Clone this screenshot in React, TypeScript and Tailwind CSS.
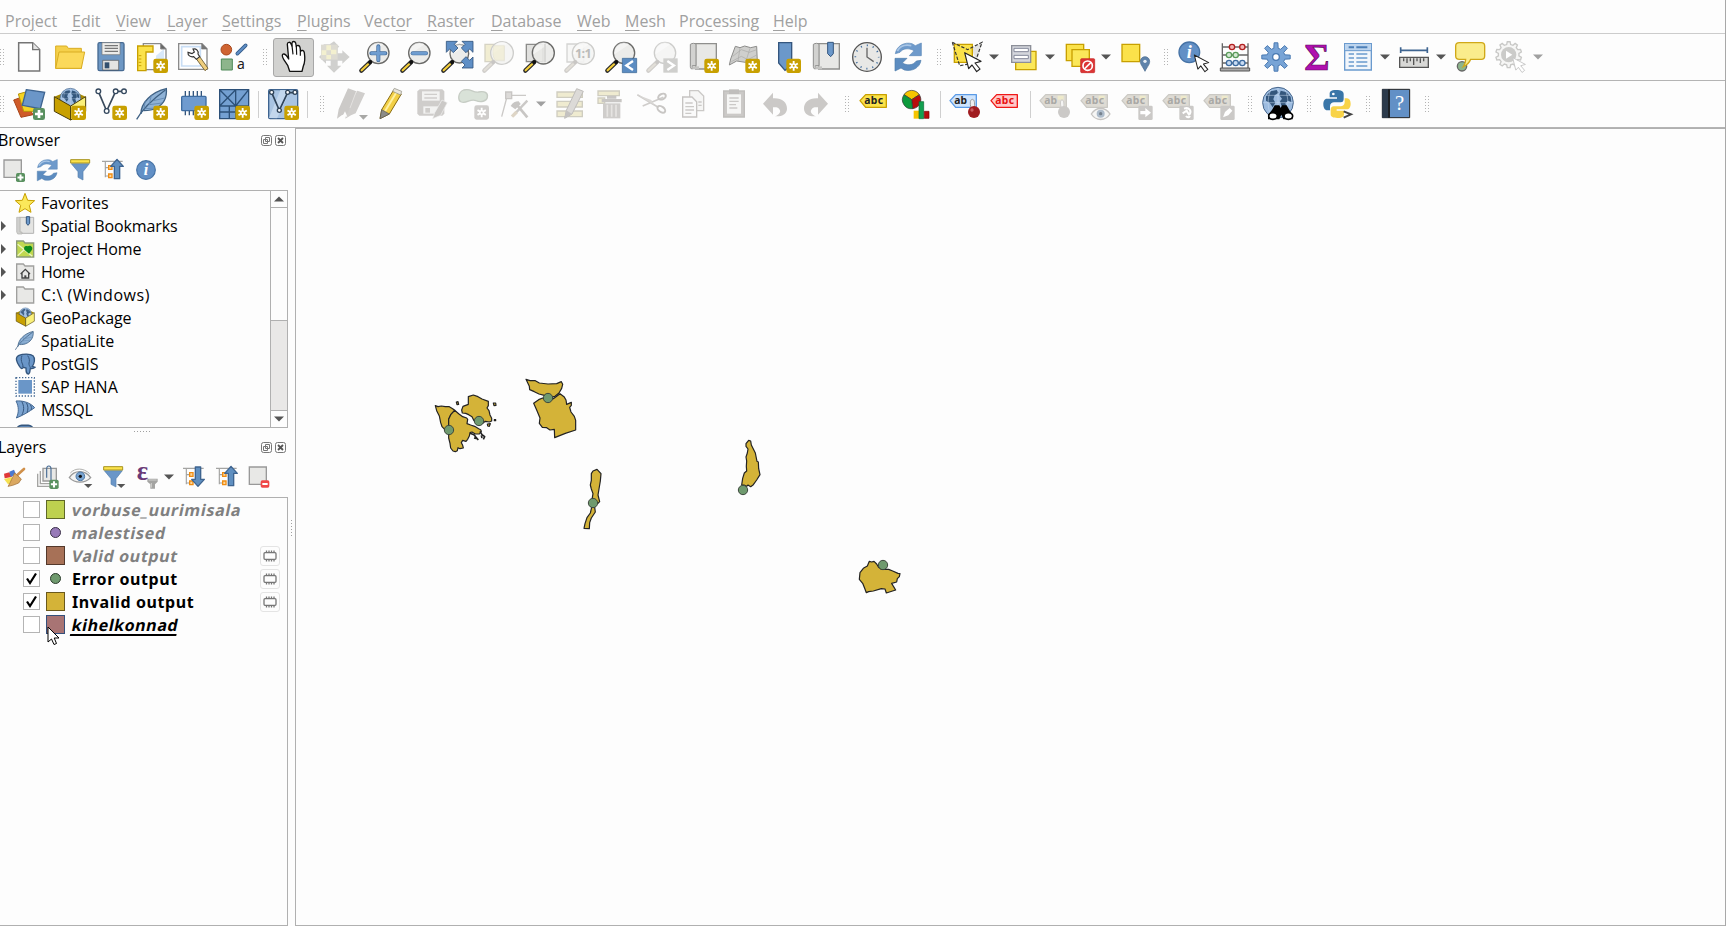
import React from "react";

type Kids = { children?: React.ReactNode };

const Ico = ({ s = 32, children }: Kids & { s?: number }) => (
  <svg width={s} height={s} viewBox={`0 0 ${s * 3} ${s * 3}`} fill="none" className="block shrink-0 overflow-visible">
    {children}
  </svg>
);

/* ---------- shared pieces ---------- */
const Star = ({ x = 52, y = 53, c = "#c8a000" }: { x?: number; y?: number; c?: string }) => (
  <g transform={`translate(${x} ${y})`}>
    <rect width="44" height="43" rx="7" fill={c} />
    <path d="M22 7v29M9.500 14.500l25 14M34.500 14.500l-25 14" stroke="#fff" strokeWidth="5.500" />
    <circle cx="22" cy="21.500" r="7.500" fill="#fff" />
    <circle cx="22" cy="21.500" r="3" fill={c} />
  </g>
);
const Plus = ({ x, y, s = 36 }: { x: number; y: number; s?: number }) => (
  <g transform={`translate(${x} ${y}) scale(${s / 36})`}>
    <rect width="36" height="36" rx="7" fill="#5a9160" />
    <path d="M18 6v24M6 18h24" stroke="#fff" strokeWidth="8" />
  </g>
);
const Lens = ({ cx = 58, cy = 36, r = 32, off = false, children }: Kids & { cx?: number; cy?: number; r?: number; off?: boolean }) => (
  <>
    <path d="M32 65L7 89" stroke={off ? "#d0cecb" : "#2b2b2b"} strokeWidth="13" strokeLinecap="round" />
    <path d="M27 70L8 88" stroke={off ? "#e2dfd8" : "#f5cf3a"} strokeWidth="6.500" strokeLinecap="round" />
    <circle cx={cx} cy={cy} r={r} fill={off ? "#f4f4f3" : "#e9e9e7"} fillOpacity="0.88" stroke={off ? "#cdcdcb" : "#6a6a68"} strokeWidth="4" />
    <path d={`M${cx - r + 4} ${cy + 4}a${r - 4} ${r - 4} 0 0 1 ${r + 12} ${-r + 2}z`} fill="#fff" opacity="0.45" />
    <circle cx="34" cy="63" r="6" fill={off ? "#c8c6c4" : "#111"} />
    {children}
  </>
);
const Cursor = ({ x, y, k = 1, off = false }: { x: number; y: number; k?: number; off?: boolean }) => (
  <path transform={`translate(${x} ${y}) scale(${k})`} d="M0 0l12 48 10-11 14 20 10-8-15-18 18-5z" fill="#fff" stroke={off ? "#c4c4c4" : "#222"} strokeWidth="3.500" strokeLinejoin="round" />
);
const Pencil = () => (
  <g strokeLinejoin="round">
    <path d="M15 92l5-27L56 6l23 12-36 60z" fill="#f2cf45" stroke="#8a6c10" strokeWidth="3" />
    <path d="M30 70L65 12" stroke="#fff0a0" strokeWidth="6" />
    <path d="M53 10l5-9 22 9-3 11z" fill="#e9e5da" stroke="#8a8a80" strokeWidth="2" />
    <path d="M15 92l5-27 23 13z" fill="#8c8c88" stroke="#555" strokeWidth="2" />
  </g>
);
const Feather = () => (
  <>
    <path d="M15 78C14 46 46 12 91 2c2 24-6 46-30 58-14 8-26 8-38 8" fill="#8fb2d6" stroke="#3f6184" strokeWidth="4" />
    <path d="M2 94C20 62 50 34 88 6" stroke="#3f6184" strokeWidth="4" />
    <path d="M28 62l34-2M40 50l38-5M52 38l34-8M24 62l4-24M40 48l6-26" stroke="#5f86b0" strokeWidth="2.500" />
  </>
);
const Globe = ({ cx, cy, r }: { cx: number; cy: number; r: number }) => (
  <g transform={`translate(${cx} ${cy}) scale(${r / 46})`}>
    <circle r="46" fill="#9dbce0" stroke="#46668c" strokeWidth="3" />
    <path d="M-36-20l14-14 18-4 6 8-12 8-4 12 6 10-8 14-8-12-12-8zM8-36l16 4 14 14 2 16-10-4-8 8 4 12-8 8-8-14-4-12 6-8-8-10z" fill="#33567c" />
    <path d="M-44 0H44M-36-22H36M0-44V44M-22-38c-10 24-10 50 0 76M22-38c10 24 10 50 0 76" stroke="#c9dcf0" strokeWidth="1.500" />
  </g>
);
const Package = () => (
  <>
    <path d="M1 26L50 6l45 20-45 24z" fill="#a88a00" />
    <Globe cx={49} cy={32} r={31} />
    <path d="M1 26l49 28v42L1 70z" fill="#c8a000" stroke="#4a3c08" strokeWidth="3" />
    <path d="M50 54l45-28v44L50 96z" fill="#faf07a" stroke="#4a3c08" strokeWidth="3" />
  </>
);
const RefreshArt = () => (
  <>
    <path d="M10 38C14 14 38 2 60 8l10 6L88 6v38H52l14-15C50 20 32 22 24 34z" fill="#6e9acb" stroke="#5b88b8" strokeWidth="2" />
    <path d="M87 58C83 82 59 92 37 87l-10-6-18 9V52h36L31 66c14 8 32 8 42-6z" fill="#5c8cc0" stroke="#4d7cab" strokeWidth="2" />
    <path d="M16 30C24 16 40 10 58 14" stroke="#a9c6e6" strokeWidth="5" />
  </>
);
const Tag = ({ fill, stroke, color, t = "abc" }: { fill: string; stroke: string; color: string; t?: string }) => (
  <>
    <path d="M3 38L20 20h62v38H20z" fill={fill} stroke={stroke} strokeWidth="4" strokeLinejoin="round" />
    <text x="16" y="49" fontFamily="'Noto Sans','Liberation Sans',sans-serif" fontWeight="700" fontSize="31" fill={color} textLength={t.length === 3 ? 56 : 38}>
      {t}
    </text>
  </>
);
const GrayTag = ({ t = "abc" }: { t?: string }) => (
  <>
    <path d="M3 38L20 20h62v38H20z" fill="#dedbd4" stroke="#cbc9c4" strokeWidth="4" strokeLinejoin="round" />
    <path d="M56 23h18v12H56z" fill="#eeeacb" />
    <text x="16" y="49" fontFamily="'Noto Sans','Liberation Sans',sans-serif" fontWeight="700" fontSize="31" fill="#a9a8a5" textLength={t.length === 3 ? 56 : 38}>
      {t}
    </text>
  </>
);
const gearPath = (n: number, cx: number, cy: number, ro: number, ri: number) => {
  let d = "";
  for (let i = 0; i < n; i++) {
    const a = (i / n) * Math.PI * 2 - Math.PI / 2;
    const w = Math.PI / n;
    const pts = [[-w * 0.62, ri], [-w * 0.34, ro], [w * 0.34, ro], [w * 0.62, ri]];
    for (const [o, r] of pts) d += `${d ? "L" : "M"}${(cx + Math.cos(a + o) * r).toFixed(1)} ${(cy + Math.sin(a + o) * r).toFixed(1)}`;
  }
  return d + "Z";
};
const MapSheet = () => (
  <>
    <path d="M26 8h62v76H26z" fill="#e8e8e6" stroke="#8f8f8d" strokeWidth="4" />
    <path d="M10 10c6-4 14-4 17 0v64H16v10c-5 0-6-4-6-8z" fill="#d2d2d0" stroke="#8f8f8d" strokeWidth="3" />
    <path d="M16 76h20v9H16z" fill="#c4c4c2" />
  </>
);

/* ---------- project toolbar ---------- */
const NewFile = () => <Ico><path d="M17 5h42l21 21v64H17z" fill="#fff" stroke="#757575" strokeWidth="4.500" /><path d="M59 5v21h21" stroke="#757575" strokeWidth="4" fill="#e4e4e4" /></Ico>;
const Folder = () => <Ico><path d="M5 82V15h33l5 7h39v60z" fill="#f5d04a" stroke="#d9ad22" strokeWidth="3" /><path d="M5 82L15 33H92L82 82z" fill="#fbd95a" stroke="#d9ad22" strokeWidth="3" /></Ico>;
const Save = () => (
  <Ico>
    <rect x="9" y="5" width="78" height="84" rx="5" fill="#6d97c4" stroke="#466a92" strokeWidth="4" />
    <path d="M21 5h54v36H21z" fill="#ececea" stroke="#777" strokeWidth="2" />
    <path d="M29 14h40M29 22h40M29 31h40" stroke="#777" strokeWidth="3.500" />
    <path d="M23 58h48v29H23z" fill="#e4e4e2" stroke="#555" strokeWidth="2" />
    <path d="M29 64h14v18H29z" fill="#33506e" />
  </Ico>
);
const NewLayout = () => (
  <Ico>
    <path d="M22 8h52l16 16v62H22z" fill="#fff" stroke="#8a8a8a" strokeWidth="4" />
    <path d="M60 44l24-20v30H60z" fill="#d8e8fa" />
    <path d="M74 8v16h16" fill="#666" stroke="#8a8a8a" strokeWidth="3" />
    <path d="M5 15h46v18H30v56H5z" fill="#fbe24a" stroke="#c8a000" strokeWidth="4" />
    <path d="M8 44h8M8 54h8M8 64h8M8 74h8" stroke="#c8a000" strokeWidth="3" />
    <Star />
  </Ico>
);
const LayoutManager = () => (
  <Ico>
    <path d="M5 8h70l15 15v62H5z" fill="#fff" stroke="#8a8a8a" strokeWidth="4" />
    <path d="M14 17h56v58H14z" stroke="#c9def5" strokeWidth="5" />
    <path d="M74 8v16h16z" fill="#777" stroke="#777" strokeWidth="2" />
    <path d="M56 51l28 38 9-7-27-38z" fill="#f0ce7c" stroke="#7a6a40" strokeWidth="3" />
    <path d="M48 24c10-2 18 6 15 15l5 8-10 8-8-8c-10 2-18-4-17-13l12 4 7-5z" fill="#fff" stroke="#333" strokeWidth="3.500" />
  </Ico>
);
const StyleManager = () => (
  <Ico>
    <circle cx="25" cy="26" r="16" fill="#cf6432" stroke="#a8481c" strokeWidth="3" />
    <path d="M58 38L83 13" stroke="#375e8c" strokeWidth="11" strokeLinecap="round" />
    <path d="M58 38L83 13" stroke="#5f8fc6" strokeWidth="6" strokeLinecap="round" />
    <path d="M10 54h33v33H10z" fill="#8db58c" stroke="#4f8a58" strokeWidth="3" />
    <text x="57" y="83" fontSize="42" fontFamily="'Noto Sans',sans-serif" fill="#222">a</text>
  </Ico>
);
const Hand = () => (
  <Ico>
    <path d="M38 91l-6-18-12-18c-6-9-5-17 1-16 5 1 9 6 14 15L31 10c0-8 9-8 11-1l3 6V6c1-6 9-6 11 0l2 11c2-6 10-4 11 2l2 12c3-5 10-3 11 4 2 14 2 30-3 40l-4 16z" fill="#fff" stroke="#111" strokeWidth="4" strokeLinejoin="round" />
    <path d="M45 14l3 26M58 16l1 25M70 26v18" stroke="#111" strokeWidth="3.500" />
  </Ico>
);
const PanSel = () => (
  <Ico>
    <path d="M48 1l16 16-5 4v16h14v-9l22 20-22 20v-9H59v15h11L48 95 27 74h11V59H24v9L3 48l14-14V10h18z" fill="#d0d0ce" />
    <path d="M9 11h50v45H9z" fill="#dddbd2" />
    <path d="M11 28h14v14H11zM25 13h14v15H25zM39 26h16v14H39zM25 42h14v13H25z" fill="#f3f0cf" />
  </Ico>
);
const ZoomIn = () => <Ico><Lens><path d="M58 16v42M37 37h42" stroke="#466f9e" strokeWidth="12" strokeLinecap="round" /><path d="M58 17v40M38 37h40" stroke="#6f9dd0" strokeWidth="8" strokeLinecap="round" /></Lens></Ico>;
const ZoomOut = () => <Ico><Lens><path d="M38 37h40" stroke="#466f9e" strokeWidth="12" strokeLinecap="round" /><path d="M38 37h40" stroke="#6f9dd0" strokeWidth="8" strokeLinecap="round" /></Lens></Ico>;
const arrowD = "M0 0h33l-9 9 11 11-14 14-11-11-10 10z";
const ZoomFull = () => (
  <Ico>
    <Lens cx={55} cy={38} r={28} />
    <g fill="#5f8fc6" stroke="#34567e" strokeWidth="2.500">
      <path transform="translate(16 1)" d={arrowD} />
      <path transform="translate(96 1) scale(-1 1)" d={arrowD} />
      <path transform="translate(96 81) scale(-1 -1)" d={arrowD} />
    </g>
  </Ico>
);
const ZoomSel = () => <Ico><path d="M9 10h58v52H9z" fill="#f1edd2" stroke="#d6d3c4" strokeWidth="4" /><Lens off cx={60} cy={36} r={34}><path d="M36 14h31v44H40c-8-10-10-30-4-44z" fill="#f1edd2" stroke="#dcd9c4" strokeWidth="2" opacity="0.7" /></Lens></Ico>;
const ZoomLayer = () => <Ico><path d="M10 10h50v52H10z" fill="#e0e0de" stroke="#8c8c8a" strokeWidth="4" /><Lens cx={61} cy={36} r={33}><path d="M66 8v56" stroke="#cfcfcd" strokeWidth="4" /></Lens></Ico>;
const ZoomNative = () => (
  <Ico>
    <path d="M9 9h50v54H9z" fill="#f7f7f6" stroke="#d4d4d2" strokeWidth="4" />
    <Lens off cx={58} cy={37} r={33} />
    <text x="58" y="50" textAnchor="middle" fontSize="38" fontWeight="700" fontFamily="'Noto Sans',sans-serif" fill="#bcbcba" textLength="50">1:1</text>
  </Ico>
);
const ZoomLast = () => <Ico><Lens cx={57} cy={36} /><path d="M52 52h43v43H52z" fill="#5b8cc2" stroke="#34608f" strokeWidth="2" /><path d="M84 60L64 73.500 84 87" stroke="#fff" strokeWidth="7" /></Ico>;
const ZoomNext = () => <Ico><Lens off cx={57} cy={36} /><path d="M52 52h43v43H52z" fill="#cfcfcd" /><path d="M64 60l20 13.500L64 87" stroke="#fff" strokeWidth="7" /></Ico>;
const NewMap = () => <Ico><MapSheet /><Star /></Ico>;
const New3D = () => (
  <Ico>
    <path d="M22 16l14 4 14-5 18 5 18-4 2 46-14-4-22 6-26-4-22 12 4-18z" fill="#cfcfcd" stroke="#8c8c8a" strokeWidth="3" />
    <path d="M14 46l26-20 24 8 22-8M10 62l30-16 20 10 26-14M36 20l-6 40M66 22L54 60" stroke="#a9a9a7" strokeWidth="2" />
    <Star />
  </Ico>
);
const NewBookmark = () => <Ico><path d="M29 5h39v68L48 88 29 66z" fill="#6b98ca" stroke="#34567e" strokeWidth="4" /><Star /></Ico>;
const Bookmarks = () => <Ico><MapSheet /><path d="M53 4h17v34l-8 9-9-9z" fill="#6b98ca" stroke="#34567e" strokeWidth="3" /></Ico>;
const Clock = () => (
  <Ico>
    <circle cx="48" cy="48" r="43" fill="#e8e8e6" stroke="#555" strokeWidth="4" />
    <circle cx="48" cy="48" r="35" stroke="#3e6c9e" strokeWidth="5" strokeDasharray="3.500 14.820" strokeDashoffset="1.750" />
    <path d="M48 20v28l20 14" stroke="#666" strokeWidth="4" />
  </Ico>
);
const Refresh = () => <Ico><RefreshArt /></Ico>;
const SelectIco = () => (
  <Ico>
    <path d="M60 24L94 4 78 60z" fill="#e3e3e1" />
    <path d="M10 10h54v54H10z" fill="#fbe24a" stroke="#c8a000" strokeWidth="4" />
    <path d="M4 4l46 22L93 4 74 60M4 4l22 70 22-4" stroke="#333" strokeWidth="3.500" strokeDasharray="10 5" />
    <Cursor x={41} y={35} />
  </Ico>
);
const SelectForm = () => <Ico><path d="M26 31h61v55H26z" fill="#fbe85a" stroke="#c8a000" strokeWidth="4" /><path d="M14 14h57v50H14z" fill="#d4d6dc" stroke="#8c8f98" strokeWidth="4" /><path d="M21 22h43v10H21zM21 43h43v10H21z" fill="#fff" stroke="#84889a" strokeWidth="3" /></Ico>;
const Deselect = () => (
  <Ico>
    <path d="M10 10h52v49H10z" fill="#fbe24a" stroke="#c8a000" strokeWidth="4" />
    <path d="M27 26h52v50H27z" fill="#fbe85a" stroke="#c8a000" strokeWidth="4" />
    <rect x="53" y="53" width="42" height="42" rx="3" fill="#dc3535" stroke="#c42020" strokeWidth="2" />
    <circle cx="74" cy="74" r="14" stroke="#fff" strokeWidth="5" />
    <path d="M64 84l20-20" stroke="#fff" strokeWidth="5" />
  </Ico>
);
const SelectLoc = () => <Ico><path d="M9 10h53v52H9z" fill="#fbe24a" stroke="#c8a000" strokeWidth="4" /><path d="M78 91c-8-16-14-20-14-30a14 14 0 0 1 28 0c0 10-6 14-14 30z" fill="#5f83ab" stroke="#48698e" strokeWidth="2" /><circle cx="78" cy="61" r="5" fill="#e8eef5" /></Ico>;
const InfoI = ({ x, y, k = 1 }: { x: number; y: number; k?: number }) => (
  <g transform={`translate(${x} ${y}) scale(${k})`}>
    <circle r="31" fill="#6290c6" stroke="#4673a6" strokeWidth="4" />
    <text x="0" y="18" textAnchor="middle" fontFamily="'Liberation Serif',serif" fontWeight="700" fontStyle="italic" fontSize="54" fill="#fff">i</text>
  </g>
);
const Identify = () => <Ico><InfoI x={34} y={34} /><Cursor x={49} y={42} k={0.88} /></Ico>;
const Abacus = () => (
  <Ico>
    <path d="M10 7v74M87 7v74M10 18h77M10 42h77M10 66h77" stroke="#666" strokeWidth="4" />
    <path d="M4 81h88v9H4z" fill="#aaa" stroke="#555" strokeWidth="3" />
    <g fill="#f3b4b4" stroke="#b02020" strokeWidth="4"><circle cx="39" cy="18" r="8" /><circle cx="70" cy="18" r="8" /></g>
    <g fill="#d4ead4" stroke="#5a9a5a" strokeWidth="4"><circle cx="30" cy="42" r="8" /><circle cx="50" cy="42" r="8" /></g>
    <g fill="#c9dcf2" stroke="#3e6ca0" strokeWidth="4"><circle cx="30" cy="66" r="8" /><circle cx="50" cy="66" r="8" /><circle cx="70" cy="66" r="8" /></g>
  </Ico>
);
const Gear = () => <Ico><path d={gearPath(8, 48, 48, 43, 27)} fill="#78a4d6" stroke="#4a7ab2" strokeWidth="3" strokeLinejoin="round" /><circle cx="48" cy="48" r="10" fill="#fff" stroke="#4a7ab2" strokeWidth="4" /></Ico>;
const Sigma = () => <Ico><text x="48" y="87" textAnchor="middle" fontFamily="'Liberation Serif','DejaVu Serif',serif" fontWeight="700" fontSize="116" fill="#b010b0" stroke="#5a0a5a" strokeWidth="2">Σ</text></Ico>;
const Table = () => (
  <Ico>
    <path d="M8 8h80v79H8z" fill="#f2f6fb" stroke="#6a9ace" strokeWidth="4" />
    <path d="M9 9h78v20H9z" fill="#bcd4ee" />
    <path d="M8 29h80" stroke="#6a9ace" strokeWidth="3" />
    <path d="M20 19h16M43 19h33" stroke="#4c7fb8" strokeWidth="6" />
    <path d="M20 39h16M43 39h33M20 51h16M43 51h33M20 63h16M43 63h33M20 75h16M43 75h33" stroke="#6a9ace" strokeWidth="4" />
  </Ico>
);
const Measure = () => <Ico><path d="M7 28h82M8 19v17M88 19v17" stroke="#3e6490" strokeWidth="5" /><path d="M5 49h86v30H5z" fill="#d8d8d6" stroke="#555" strokeWidth="4" /><path d="M17 52v9M27 52v14M37 52v9M47 52v20M57 52v9M67 52v14M77 52v9" stroke="#555" strokeWidth="4" /></Ico>;
const Tips = () => <Ico><circle cx="24" cy="76" r="14" fill="#8db58c" stroke="#666" strokeWidth="4" /><path d="M16 5h66c6 0 10 4 10 10v30c0 6-4 10-10 10H50C46 66 40 72 28 77c5-7 7-14 7-22H16C9 55 5 51 5 45V15C5 9 9 5 16 5z" fill="#faec8c" stroke="#d0a818" strokeWidth="4" /></Ico>;
const Action = () => <Ico><path d={gearPath(10, 41, 41, 39, 31)} fill="#f6f6f5" stroke="#c8c8c6" strokeWidth="4" /><circle cx="41" cy="41" r="23" fill="#cbcbc9" /><path d="M33 29l19 12-19 12z" fill="#fff" /><Cursor x={53} y={50} k={0.78} off /></Ico>;

/* ---------- layer toolbar ---------- */
const DataSource = () => (
  <Ico>
    <path d="M2 36l28-10 30 54-36 8z" fill="#cf5a28" stroke="#a84418" strokeWidth="3" />
    <path d="M16 18l30-8 22 60-36 0z" fill="#f5d423" stroke="#b89408" strokeWidth="3" />
    <path d="M40 5l55 8-13 49-54-10z" fill="#6b96c8" stroke="#3e6490" strokeWidth="4" />
    <Plus x={60} y={60} />
  </Ico>
);
const GeoPkg = () => <Ico><Package /><Star /></Ico>;
const Shape = () => (
  <Ico>
    <path d="M10 10l25 59L62 10h25" stroke="#3a4a5c" strokeWidth="5" />
    <g fill="#fff" stroke="#34485e" strokeWidth="4"><circle cx="10" cy="10" r="7" /><circle cx="35" cy="69" r="7" /><circle cx="62" cy="10" r="7" /><circle cx="87" cy="10" r="7" /></g>
    <Star />
  </Ico>
);
const SpatiaLite = () => <Ico><Feather /><Star /></Ico>;
const Scratch = () => (
  <Ico>
    <path d="M25 9v15M37 9v15M49 9v15M61 9v15M73 9v15M25 69v13M37 69v13M49 69v13" stroke="#34567e" strokeWidth="4" />
    <rect x="14" y="25" width="73" height="43" rx="3" fill="#6f9bcf" stroke="#3e6ca0" strokeWidth="4" />
    <Star />
  </Ico>
);
const MeshIco = () => (
  <Ico>
    <path d="M5 5h87v87H5z" fill="#74a0d2" />
    <path d="M5 5h87v87H5zM5 54h87M53 5v49M5 5l48 49M53 5L5 54M92 5L53 54M5 72h48M34 54v38M53 54v38" stroke="#2c5078" strokeWidth="4" />
    <Star />
  </Ico>
);
const Virtual = () => (
  <Ico>
    <rect x="5" y="5" width="87" height="87" rx="4" fill="#a9c4e2" stroke="#3e6490" strokeWidth="4" />
    <path d="M6 90L40 6h30L30 91z" fill="#c9dcf0" opacity="0.8" />
    <path d="M14 14l23 53L62 14h22" stroke="#2f4358" strokeWidth="5" />
    <g fill="#fff" stroke="#2f4358" strokeWidth="4"><circle cx="14" cy="13" r="6" /><circle cx="37" cy="67" r="6" /><circle cx="62" cy="13" r="6" /><circle cx="84" cy="13" r="6" /></g>
    <Star />
  </Ico>
);
const Edits = () => (
  <Ico>
    <path d="M34 92l4-28L70 8l23 8-28 60-14 6z" fill="#d0cecc" />
    <path d="M9 92l5-28L42 1l25 9-26 66-18 6z" fill="#cccac8" />
    <path d="M67 10L48 60" stroke="#e4e2e0" strokeWidth="3" />
    <path d="M26 84l7-14 7 16z" fill="#fdfdfd" />
    <path d="M75 81h27L88 95z" fill="#a8a8a6" />
  </Ico>
);
const Toggle = () => <Ico><Pencil /></Ico>;
const SaveEdits = () => (
  <Ico>
    <path d="M11 4h68l6 6v67l-6 6H10l-6-6V10z" fill="#cfcdcb" />
    <path d="M18 10h53v28H18z" fill="#f2f2f1" />
    <path d="M25 19h38M25 30h38" stroke="#cfcdcb" strokeWidth="4" />
    <path d="M22 55h44v22H22z" fill="#f2f2f1" />
    <path d="M28 60h14v14H28z" fill="#cfcdcb" />
    <path d="M50 92l6-18 22-38 16 8-20 38z" fill="#cbc9c7" stroke="#f2f2f1" strokeWidth="2" />
  </Ico>
);
const AddFeature = () => <Ico><path d="M20 6c22-6 26 8 44 6 18-4 30 2 27 16-2 12-20 16-34 10-16-8-28 10-44 4C0 36 4 12 20 6z" fill="#d9e2d8" stroke="#c6ccc4" strokeWidth="4" /><Star x={52} y={52} c="#cfcdcb" /></Ico>;
const Vertex = () => (
  <Ico>
    <path d="M26 30L11 86M34 22h50" stroke="#cbc9c7" strokeWidth="4" />
    <path d="M23 12h18v20H23z" fill="#dcdad8" stroke="#c8c6c4" strokeWidth="4" />
    <path d="M88 38L46 82" stroke="#cbc9c7" strokeWidth="7" />
    <path d="M58 52l30 36" stroke="#c8c6c4" strokeWidth="8" />
    <path d="M38 54c6-10 14-14 24-14l6 8-16 16z" fill="#c8c6c4" />
    <path d="M42 86l14-14" stroke="#ded5c6" strokeWidth="10" />
  </Ico>
);
const MultiEdit = () => <Ico><path d="M9 12h76v16H9zM9 40h76v17H9zM9 69h76v17H9z" fill="#efebd0" stroke="#cfcdc0" strokeWidth="4" /><path d="M32 91l5-24L68 2l20 8-34 68z" fill="#dcdad7" stroke="#bfbdbb" strokeWidth="3" /><path d="M32 91l5-24 17 11z" fill="#c4c2c0" /></Ico>;
const Trash = () => (
  <Ico>
    <path d="M9 9h64v14H9zM9 30h20v16H9z" fill="#efebd0" stroke="#cfcdc0" strokeWidth="4" />
    <path d="M20 33h60v10H20zM36 24h28v8H36z" fill="#c8c6c4" />
    <path d="M24 46h52v45H24z" fill="#cfcdcb" />
    <path d="M37 50v36M50 50v36M63 50v36" stroke="#e6e4e2" strokeWidth="5" />
  </Ico>
);
const Cut = () => <Ico><path d="M4 20l60 36M20 54l62-26" stroke="#cfcdcb" strokeWidth="5" /><path d="M4 20l42 16 8 14z" fill="#dad8d6" /><ellipse cx="78" cy="26" rx="12" ry="8" transform="rotate(-25 78 26)" stroke="#c8c6c4" strokeWidth="6" /><ellipse cx="76" cy="64" rx="13" ry="8" transform="rotate(35 76 64)" stroke="#c8c6c4" strokeWidth="6" /></Ico>;
const Copy = () => (
  <Ico>
    <path d="M38 8h26l16 16v44H38z" fill="#f6f6f5" stroke="#cbc9c7" strokeWidth="4" />
    <path d="M17 27h28l14 14v46H17z" fill="#fafafa" stroke="#c6c4c2" strokeWidth="4" />
    <path d="M25 45h22M25 56h26M25 66h26M25 76h18M64 42h10M64 52h10" stroke="#cbc9c7" strokeWidth="4" />
  </Ico>
);
const Paste = () => (
  <Ico>
    <path d="M17 9h62v78H17z" fill="#cbc9c7" stroke="#c0bebc" strokeWidth="4" />
    <path d="M27 19h42v58H27z" fill="#f6f6f5" />
    <path d="M33 4h30v14H33z" fill="#c0bebc" />
    <path d="M34 30h28M34 40h28M34 50h20M34 60h24" stroke="#cbc9c7" strokeWidth="4" />
  </Ico>
);
const UndoPath = () => <path d="M12 47L42 14v17c26-2 43 12 42 32-1 12-10 20-24 22h-12c14-6 18-14 14-20-4-7-10-8-20-7v22z" fill="#cbc9c7" />;
const Undo = () => <Ico><UndoPath /></Ico>;
const Redo = () => <Ico><g transform="translate(96 0) scale(-1 1)"><UndoPath /></g></Ico>;
const Label = () => <Ico><Tag fill="#fbe24a" stroke="#c8a000" color="#222" /></Ico>;
const Diagram = () => (
  <Ico>
    <path d="M35 35L12 20A27 27 0 0 1 58 20z" fill="#f5c400" stroke="#333" strokeWidth="2" />
    <path d="M35 35l23-15a27 27 0 0 1-20 42z" fill="#b80c0c" stroke="#333" strokeWidth="2" />
    <path d="M35 35l3 27A27 27 0 0 1 12 20z" fill="#0c9a3c" stroke="#333" strokeWidth="2" />
    <path d="M41 68h16v24H41z" fill="#f5c400" />
    <path d="M57 41h14v51H57z" fill="#12a050" stroke="#0a6a34" strokeWidth="2" />
    <path d="M73 70h14v21H73z" fill="#b80c0c" stroke="#700" strokeWidth="2" />
  </Ico>
);
const PinLabel = () => <Ico><Tag fill="#cfe4fc" stroke="#5a9ae6" color="#222" t="ab" /><path d="M66 60c-4-16-2-26 4-26s8 10 6 24z" fill="#eee" stroke="#999" strokeWidth="3" /><circle cx="75" cy="72" r="18" fill="#a01c20" /><circle cx="69" cy="66" r="5" fill="#c85a5e" /></Ico>;
const RedLabel = () => <Ico><Tag fill="#ffcaca" stroke="#f01818" color="#e81010" /></Ico>;
const G1 = () => <Ico><GrayTag t="ab" /><path d="M66 58c-3-14-2-22 3-22s7 8 5 22z" fill="#f4f4f3" stroke="#cbc9c7" strokeWidth="3" /><circle cx="75" cy="72" r="18" fill="#cbc9c7" /></Ico>;
const G2 = () => <Ico><GrayTag /><path d="M34 78c14-22 42-22 56 0-14 22-42 22-56 0z" fill="#f6f6f5" stroke="#c6c4c2" strokeWidth="4" /><circle cx="62" cy="77" r="12" fill="#aebccb" /><circle cx="62" cy="77" r="5" fill="#77828e" /></Ico>;
const GBox = ({ children }: Kids) => <Ico><GrayTag /><rect x="52" y="53" width="43" height="43" rx="4" fill="#cbc9c7" />{children}</Ico>;
const G3 = () => <GBox><path d="M58 69h15v-9l17 14-17 14v-9H58z" fill="#fff" /></GBox>;
const G4 = () => <GBox><path d="M66 62c16-6 24 8 16 18M62 76l12-8 8 14M72 84c4 6 10 4 12 0" stroke="#fff" strokeWidth="6" /></GBox>;
const G5 = () => <GBox><path d="M60 88l6-16 14-12 8 8-12 14z" fill="#fff" /></GBox>;
const GlobeBin = () => (
  <Ico>
    <Globe cx={48} cy={44} r={46} />
    <path d="M30 66l8-14h14l4 8 4-8h14l8 14 10 14v14H64l-6-14-6 14H18V80z" fill="#000" />
    <ellipse cx="33" cy="84" rx="13" ry="10" fill="#fff" stroke="#000" strokeWidth="5" />
    <ellipse cx="79" cy="84" rx="13" ry="10" fill="#fff" stroke="#000" strokeWidth="5" />
  </Ico>
);
const Python = () => (
  <Ico>
    <path d="M46 6c-18 0-20 6-20 12v10h22v4H18C10 32 7 40 7 49c0 10 4 18 12 18h8V55c0-8 6-12 12-12h20c6 0 9-4 9-10V18C68 10 60 6 46 6z" fill="#3a76a8" />
    <circle cx="37" cy="18" r="4" fill="#fff" />
    <path d="M49 90c18 0 20-6 20-12V68H47v-4h30c8 0 12-8 12-17s-4-16-11-16h-7v12c0 8-6 12-12 12H38c-6 0-9 4-9 10v14c0 8 8 11 20 11z" fill="#f8d348" />
    <path d="M68 70l22 9-22 10" stroke="#444" strokeWidth="6" />
  </Ico>
);
const HelpBook = () => (
  <Ico>
    <path d="M7 4h82v85H7z" fill="#6290c6" stroke="#222" strokeWidth="3" />
    <path d="M7 4h22v85H7z" fill="#2c3b4c" />
    <path d="M24 4h6v85h-6z" fill="#1c2024" />
    <text x="59" y="66" textAnchor="middle" fontFamily="'Liberation Serif',serif" fontSize="62" fill="#fff">?</text>
  </Ico>
);

/* ---------- toolbar layout ---------- */
const Btn = ({ children, on = false }: Kids & { on?: boolean }) => (
  <div className={on ? "flex h-[39px] w-[41px] shrink-0 items-center justify-center rounded-[3px] border border-[#a8a8a8] bg-[#d2d2d0]" : "flex h-[39px] w-[41px] shrink-0 items-center justify-center"}>{children}</div>
);
const Drop = ({ off = false }: { off?: boolean }) => (
  <div className="flex w-[15px] shrink-0 items-center justify-center pr-[2px]">
    <svg width="10" height="6" viewBox="0 0 10 6"><path d="M0 .5h10L5 5.500z" fill={off ? "#a0a0a0" : "#555"} /></svg>
  </div>
);
const Dots = () => (
  <svg width="5" height="17" viewBox="0 0 5 17" fill="#b4b4b4" className="block shrink-0">
    {[0, 3, 6, 9, 12, 15].map((y) => (
      <React.Fragment key={y}><rect x="0" y={y} width="1" height="1" /><rect x="3" y={y} width="1" height="1" /></React.Fragment>
    ))}
  </svg>
);
const Grip = () => <div className="flex w-[18px] shrink-0 items-center justify-center pl-[4px]"><Dots /></div>;
const Sep = () => <div className="flex w-[8px] shrink-0 justify-center"><div className="h-[27px] w-px bg-[#cfcfcf]" /></div>;
const Start = () => <div className="flex w-[8.5px] shrink-0 items-center"><Dots /></div>;

const menu: [string, string, string, string][] = [
  ["Pro", "j", "ect", "w-[67px]"], ["", "E", "dit", "w-[44px]"], ["", "V", "iew", "w-[51px]"], ["", "L", "ayer", "w-[55px]"],
  ["", "S", "ettings", "w-[75px]"], ["", "P", "lugins", "w-[67px]"], ["Vect", "o", "r", "w-[63px]"], ["", "R", "aster", "w-[64px]"],
  ["", "D", "atabase", "w-[86px]"], ["", "W", "eb", "w-[48px]"], ["", "M", "esh", "w-[54px]"], ["Pro", "c", "essing", "w-[94px]"], ["", "H", "elp", "w-[40px]"],
];

/* ---------- panels ---------- */
const FloatClose = () => (
  <div className="flex gap-[3px]">
    <svg width="11" height="11" viewBox="0 0 11 11" fill="none" stroke="#777"><rect x=".5" y=".5" width="10" height="10" rx="2" /><path d="M4.500 2.500h4v4h-4zM2.500 4.500h4v4h-4z" /></svg>
    <svg width="11" height="11" viewBox="0 0 11 11" fill="none" stroke="#777"><rect x=".5" y=".5" width="10" height="10" rx="2" /><path d="M3 3l5 5M8 3L3 8" stroke="#555" strokeWidth="1.800" /></svg>
  </div>
);
const Funnel = () => (
  <>
    <path d="M10 17h54L45 41v25l-15-8V41z" fill="#6a96c8" stroke="#5580ae" strokeWidth="2" />
    <path d="M8 5h57v10H8z" fill="#fbe24a" stroke="#a89420" strokeWidth="3" />
  </>
);
const TreeArrow = ({ down = false }: { down?: boolean }) => (
  <Ico s={24}>
    <path d="M3 10h62M13 10v48M13 29h10M13 54h10" stroke="#a4a4a2" strokeWidth="3.500" />
    <path d="M23 23h10v11H23zM23 48h10v11H23z" fill="#fcd7a0" stroke="#f08c10" strokeWidth="4" />
    <path transform={down ? "translate(0 68) scale(1 -1)" : undefined} d="M48 4l19 21H56v37H40V25H29z" fill="#5f8fc0" stroke="#3e6490" strokeWidth="4" strokeLinejoin="round" />
  </Ico>
);
const SmallTri = () => <path d="M48 57h25L60.500 69z" fill="#555" />;

const AddLayer = () => <Ico s={24}><path d="M6 6h52v52H6z" fill="#e8e8e6" stroke="#999" strokeWidth="4" /><Plus x={42} y={45} s={27} /></Ico>;
const SmRefresh = () => <Ico s={24}><g transform="scale(.76)"><RefreshArt /></g></Ico>;
const SmInfo = () => <Ico s={24}><InfoI x={36} y={36} k={0.9} /></Ico>;
const Brush = () => (
  <Ico s={24}>
    <path d="M6 26l16-4 8 14-22 4z" fill="#e03838" /><path d="M22 20l14-6 6 14-16 8z" fill="#4a7ad0" /><path d="M6 42l24-6 8 14-20 8z" fill="#f5e050" />
    <path d="M46 30L66 12" stroke="#d0904a" strokeWidth="8" strokeLinecap="round" />
    <path d="M38 24l20 18-8 12-18 7-14 3c6-8 10-20 20-40z" fill="#dba860" stroke="#a87840" strokeWidth="2.500" />
  </Ico>
);
const AddGroup = () => (
  <Ico s={24}>
    <path d="M8 26v38h36M16 18v38h36" stroke="#a4a4a2" strokeWidth="4" /><path d="M24 10h40v38H24z" fill="#e8e8e6" stroke="#999" strokeWidth="4" />
    <path d="M35 38V12c0-12 13-12 13 0v36" stroke="#4a6e96" strokeWidth="3.500" /><Plus x={43} y={44} s={28} />
  </Ico>
);
const Eye = () => (
  <Ico s={24}>
    <path d="M4 38C19 14 51 14 68 38 51 56 21 56 4 38z" fill="#f4f4f3" stroke="#999" strokeWidth="4" /><path d="M7 24C21 8 47 8 65 26" stroke="#b0b0ae" strokeWidth="3" />
    <circle cx="37" cy="34" r="13" fill="#7aa4d0" stroke="#4e78a6" strokeWidth="3" /><circle cx="37" cy="34" r="5" fill="#111" /><SmallTri />
  </Ico>
);
const FilterBrowser = () => <Ico s={24}><Funnel /></Ico>;
const FilterLegend = () => <Ico s={24}><Funnel /><SmallTri /></Ico>;
const Expr = () => (
  <Ico s={24}>
    <text x="8" y="45" fontFamily="'Liberation Serif',serif" fontWeight="700" fontSize="80" fill="#6a3a78">ε</text>
    <path d="M40 41h31v9L63 58v13H49V58L40 50z" fill="#a4a4a2" />
    <path d="M44 45h24M52 54v14" stroke="#d0d0ce" strokeWidth="3" />
  </Ico>
);
const RemoveLayer = () => <Ico s={24}><path d="M4 6h51v52H4z" fill="#e8e8e6" stroke="#999" strokeWidth="4" /><rect x="38" y="46" width="26" height="22" rx="5" fill="#f04848" /><path d="M43 57h16" stroke="#fff" strokeWidth="6" /></Ico>;

/* ---------- browser tree icons ---------- */
const Fav = () => <Ico s={20}><path d="M30 1l8 21 21 1-16 14 5 21-18-11-18 11 5-21L1 23l21-1z" fill="#fbe85a" stroke="#c8a000" strokeWidth="3" strokeLinejoin="round" /></Ico>;
const SBook = () => <Ico s={20}><path d="M14 4h42v48H14z" fill="#e4e4e2" stroke="#b4b4b2" strokeWidth="3" /><path d="M5 4h10v44h6v6H8l-3-6z" fill="#cfcfcd" stroke="#b0b0ae" strokeWidth="2" /><path d="M34 2h10v20l-5 6-5-6z" fill="#6b98ca" stroke="#34567e" strokeWidth="3" /></Ico>;
const folderD = "M5 6h20l5 6h26v42H5z";
const PHome = () => <Ico s={20}><path d={folderD} fill="#c0d850" stroke="#8a9a78" strokeWidth="4" /><path d="M8 16l44 36M8 50l24-22" stroke="#eef6c0" strokeWidth="4" /><path d="M42 44L28 32c-3-8 3-14 10-10 8-5 17 2 13 10z" fill="#0c8a1c" /></Ico>;
const HomeI = () => <Ico s={20}><path d={folderD} fill="#e8e8e6" stroke="#a0a09e" strokeWidth="4" /><path d="M17 36l14-14 14 14M21 34v14h20V34" stroke="#444" strokeWidth="4" /><path d="M28 40h6v8h-6z" fill="#444" /></Ico>;
const Drive = () => <Ico s={20}><path d={folderD} fill="#e8e8e6" stroke="#a0a09e" strokeWidth="4" /></Ico>;
const TPkg = () => <Ico s={20}><g transform="translate(3 -1) scale(.58)"><Package /></g></Ico>;
const TFeather = () => <Ico s={20}><g transform="scale(.6)"><Feather /></g></Ico>;
const Elephant = () => (
  <Ico s={20}>
    <path d="M12 4C24-1 46-1 54 5c8 8 4 24-2 32l8 3c-4 4-8 4-14 3-2 8 0 14-5 17-8 0-8-8-8-18l-8-2c-4 6-8 4-12-4C6 26-2 10 12 4z" fill="#6a96c8" stroke="#34567e" strokeWidth="4" />
    <path d="M21 5c-4 8-2 16 0 22 2 4 4 8 2 12M38 5c6 8 6 16 4 22-1 6 2 8 4 14" stroke="#34567e" strokeWidth="3" />
  </Ico>
);
const Hana = () => <Ico s={20}><rect x="3" y="2" width="55" height="55" stroke="#466a94" strokeWidth="4" strokeDasharray="4 5" /><path d="M10 9h41v41H10z" fill="#6a96c8" /></Ico>;
const Mssql = () => <Ico s={20}><path d="M3 3c22-2 44 6 56 20C44 34 24 46 4 54c8-16 8-34-1-51z" fill="#7ba3d0" stroke="#466a94" strokeWidth="3" /><path d="M20 4c8 14 8 28 0 42M34 8c6 10 6 20 2 30M46 14c4 6 4 12 2 16" stroke="#34567e" strokeWidth="3" /></Ico>;
const Oracle = () => <Ico s={20}><rect x="6" y="7" width="48" height="46" rx="14" fill="#6a96c8" stroke="#34567e" strokeWidth="5" /></Ico>;

const tree: [string, () => React.JSX.Element, boolean, string][] = [
  ["Favorites", Fav, false, ""], ["Spatial Bookmarks", SBook, true, "tracking-[-0.12px]"], ["Project Home", PHome, true, "tracking-[-0.1px]"], ["Home", HomeI, true, "tracking-[-0.4px]"],
  ["C:\\ (Windows)", Drive, true, "tracking-[0.55px]"], ["GeoPackage", TPkg, false, "tracking-[-0.1px]"], ["SpatiaLite", TFeather, false, ""], ["PostGIS", Elephant, false, ""],
  ["SAP HANA", Hana, false, ""], ["MSSQL", Mssql, false, "tracking-[-0.2px]"], ["Oracle", Oracle, false, ""],
];

type Layer = { name: string; on: boolean; dot?: boolean; swatch: string; cls: string; chip: boolean };
const layers: Layer[] = [
  { name: "vorbuse_uurimisala", on: false, swatch: "bg-[#bed14f] border-[#5f6828]", cls: "-skew-x-12 tracking-[0.75px] text-[#808080]", chip: false },
  { name: "malestised", on: false, dot: true, swatch: "bg-[#977ab8] border-[#3a3048]", cls: "-skew-x-12 tracking-[0.7px] text-[#808080]", chip: false },
  { name: "Valid output", on: false, swatch: "bg-[#a77157] border-[#53382b]", cls: "-skew-x-12 tracking-[0.65px] text-[#808080]", chip: true },
  { name: "Error output", on: true, dot: true, swatch: "bg-[#6f9a6e] border-[#2c3c2c]", cls: "tracking-[0.55px] text-black", chip: true },
  { name: "Invalid output", on: true, swatch: "bg-[#d4b338] border-[#6a591c]", cls: "tracking-[0.6px] text-black", chip: true },
  { name: "kihelkonnad", on: false, swatch: "bg-[#a87474] border-[#34507c]", cls: "-skew-x-12 tracking-[0.6px] text-black underline decoration-2 underline-offset-[3px]", chip: false },
];
const Chip = () => (
  <div className="flex h-[20px] w-[20px] items-center justify-center rounded-[3px] border border-[#e4e4e4]">
    <svg width="16" height="14" viewBox="0 0 16 14" fill="none" stroke="#777" strokeWidth="1.300"><rect x="2" y="3.700" width="12" height="6.600" rx="1" /><path d="M4.500 1.500v2M7 1.500v2M9.500 1.500v2M12 1.500v2M4.500 10.500v2M7 10.500v2M9.500 10.500v2M12 10.500v2" /></svg>
  </div>
);

const Dot = ({ x, y }: { x: number; y: number }) => <circle cx={x} cy={y} r="14" fill="#6f9a6e" stroke="#3c463c" strokeWidth="3" />;

const MapCanvas = () => (
  <svg width="1429" height="796" viewBox="296 129 1429 796" className="block">
    <g fill="#d4b338" stroke="#232323" strokeWidth="3.600" strokeLinejoin="round">
      <g transform="translate(420 360) scale(.33333)">
        <path d="M46 137L54 140 64 138 76 140 88 140 98 146 104 151 93 163 86 178 86 196 86 210 74 208 66 200 62 188 58 168 50 152Z" />
        <path d="M104 151L116 161 128 170 140 174 143 178 141 191 152 195 164 199 176 206 182 209 184 214 178 222 166 222 156 216 150 218 148 228 143 238 138 244 128 241 124 248 128 256 130 264 120 266 114 263 112 272 106 275 99 273 92 264 90 250 86 234 86 205 86 178 93 163Z" />
        <path d="M145 110l15-5 14 5 12 7 19 7 0 13-4 7 6 8 3 13 5 10 0 8-7 3-12-2-8 6-16 2-10-10-6-12-10-6-9-4-10-1-2-9 4-11 16-6z" />
        <path d="M109 126l5-1 2 8-5 1zM220 129l7 0 1 7-6 1zM202 192l9-1-3 8-5-1zM223 179h4v3h-4z" />
        <path d="M150 220L162 224 168 232 175 240M180 214L186 224 194 230 190 238M162 234L172 236M184 226L186 234" fill="none" strokeWidth="5" />
        <path d="M318 58l12 4 16 0 12 7 26 3 26-1 14-6 4 8-3 12-8 14-12 10-16 4-16-7-16-4-14-7-14-6-1-10z" />
        <path d="M368 114L384 122 400 116 420 101 432 110 438 120 440 133 454 127 454 136 449 142 453 156 463 169 467 181 467 210 436 220 404 233 403 208 390 210 380 203 367 202 358 190 360 174 350 150 341 130 356 119Z" />
        <path d="M519 333l12-5 12 13-2 22-4 24-3 18 5 20-6 6-16-4 0-14 2-12-5-14-3-12 3-14 0-20z" />
        <path d="M516 438l8 4 2 14-12 18-5 14-1 18-16-1 3-14 6-18 10-14z" />
        <Dot x={87} y={210} /><Dot x={177} y={183} /><Dot x={384} y={114} /><Dot x={519} y={429} />
      </g>
      <g transform="translate(720 420) scale(.33333)">
        <path d="M78 71l8-10 6 2 2 12 12 24 5 25 4 2 1 20 4 18-10 16-10 14-8 6-8-5-4 4-8-4-7 0 3-20 5-16 7-6-1-14 1-16-2-12 4-12 2-12-6-8z" />
        <path d="M448 424L455 426 462 424 470 432 476 442 484 448 506 448 518 453 534 460 540 461 538 470 532 476 530 486 515 490 519 497 527 510 499 519 495 507 484 506 460 513 446 515 439 518 434 505 428 490 418 478 420 458 430 445 442 438Z" />
        <Dot x={69} y={210} /><Dot x={489} y={435} />
      </g>
    </g>
  </svg>
);

export default function App() {
  return (
    <div className="relative flex h-[926px] w-[1726px] flex-col overflow-hidden bg-[#fdfdfd] font-['Open_Sans','Noto_Sans',sans-serif] text-[16px] leading-[23px] text-black">
      <div className="flex h-[34px] items-end border-b border-[#cccccc] pl-[5px] text-[#a0a0a0]">
        {menu.map(([a, u, b, w]) => (
          <div key={a + u + b} className={`${w} h-[23px] shrink-0 whitespace-nowrap`}>
            {a}<span className="underline decoration-1 underline-offset-[3px]">{u}</span>{b}
          </div>
        ))}
      </div>

      <div className="flex h-[47px] items-center border-b border-[#b4b4b4]">
        <Start />
        <Btn><NewFile /></Btn><Btn><Folder /></Btn><Btn><Save /></Btn><Btn><NewLayout /></Btn><Btn><LayoutManager /></Btn><Btn><StyleManager /></Btn>
        <Grip />
        <Btn on><Hand /></Btn><Btn><PanSel /></Btn><Btn><ZoomIn /></Btn><Btn><ZoomOut /></Btn><Btn><ZoomFull /></Btn><Btn><ZoomSel /></Btn><Btn><ZoomLayer /></Btn><Btn><ZoomNative /></Btn>
        <Btn><ZoomLast /></Btn><Btn><ZoomNext /></Btn><Btn><NewMap /></Btn><Btn><New3D /></Btn><Btn><NewBookmark /></Btn><Btn><Bookmarks /></Btn><Btn><Clock /></Btn><Btn><Refresh /></Btn>
        <Grip />
        <Btn><SelectIco /></Btn><Drop /><Btn><SelectForm /></Btn><Drop /><Btn><Deselect /></Btn><Drop /><Btn><SelectLoc /></Btn>
        <Grip />
        <Btn><Identify /></Btn><Btn><Abacus /></Btn><Btn><Gear /></Btn><Btn><Sigma /></Btn><Btn><Table /></Btn><Drop /><Btn><Measure /></Btn><Drop /><Btn><Tips /></Btn><Btn><Action /></Btn><Drop off />
      </div>

      <div className="flex h-[47px] items-center border-b border-[#b4b4b4]">
        <Start />
        <Btn><DataSource /></Btn><Btn><GeoPkg /></Btn><Btn><Shape /></Btn><Btn><SpatiaLite /></Btn><Btn><Scratch /></Btn><Btn><MeshIco /></Btn><Sep /><Btn><Virtual /></Btn><Sep />
        <Grip />
        <Btn><Edits /></Btn><Btn><Toggle /></Btn><Btn><SaveEdits /></Btn><Btn><AddFeature /></Btn><Btn><Vertex /></Btn><Drop off /><Btn><MultiEdit /></Btn><Btn><Trash /></Btn><Btn><Cut /></Btn><Btn><Copy /></Btn><Btn><Paste /></Btn><Btn><Undo /></Btn><Btn><Redo /></Btn>
        <Grip />
        <Btn><Label /></Btn><Btn><Diagram /></Btn><Sep /><Btn><PinLabel /></Btn><Btn><RedLabel /></Btn><Sep /><Btn><G1 /></Btn><Btn><G2 /></Btn><Btn><G3 /></Btn><Btn><G4 /></Btn><Btn><G5 /></Btn>
        <Grip />
        <Btn><GlobeBin /></Btn><Grip /><Btn><Python /></Btn><Grip /><Btn><HelpBook /></Btn><Grip />
      </div>

      <div className="flex min-h-0 flex-1">
        <div className="flex w-[288px] shrink-0 flex-col">
          <div className="flex h-[24px] items-center justify-between pr-[2px]"><span className="-ml-[2px]">Browser</span><FloatClose /></div>
          <div className="mb-[2px] flex h-[36px] items-center gap-[9px] pl-[2px]"><AddLayer /><SmRefresh /><FilterBrowser /><TreeArrow /><SmInfo /></div>
          <div className="flex h-[238px] border-y border-r border-[#b0b0b0]">
            <div className="min-w-0 flex-1 overflow-hidden">
              {tree.map(([name, Icon, exp, track]) => (
                <div key={name} className="flex h-[23px] items-center">
                  <div className="w-[15px]">{exp && <svg width="6" height="10" viewBox="0 0 6 10"><path d="M1 0l5 5-5 5z" fill="#555" /></svg>}</div>
                  <Icon /><span className={`ml-[6px] mt-[2px] whitespace-nowrap ${track}`}>{name}</span>
                </div>
              ))}
            </div>
            <div className="flex w-[17px] flex-col border-l border-[#b0b0b0]">
              <div className="flex h-[17px] items-center justify-center border-b border-[#b0b0b0]"><svg width="10" height="6" viewBox="0 0 10 6"><path d="M0 5.500h10L5 .5z" fill="#555" /></svg></div>
              <div className="h-[112px]" />
              <div className="flex-1 border-y border-[#b0b0b0] bg-[#e9e8e7]" />
              <div className="flex h-[16px] items-center justify-center"><svg width="10" height="6" viewBox="0 0 10 6"><path d="M0 .5h10L5 5.500z" fill="#555" /></svg></div>
            </div>
          </div>
          <div className="flex h-[7px] items-center justify-center gap-[2px] pr-[4px]">
            {[0, 1, 2, 3, 4, 5].map((i) => <div key={i} className="size-px bg-[#a0a0a0]" />)}
          </div>
          <div className="flex h-[24px] items-center justify-between pr-[2px]"><span className="-ml-[2px]">Layers</span><FloatClose /></div>
          <div className="mb-[2px] flex h-[36px] items-center gap-[9px] pl-[2px]">
            <Brush /><AddGroup /><Eye /><FilterLegend />
            <div className="flex w-[39px] items-center gap-[6px]"><Expr /><svg width="10" height="6" viewBox="0 0 10 6" className="shrink-0"><path d="M0 .5h10L5 5.500z" fill="#555" /></svg></div>
            <TreeArrow down /><TreeArrow /><RemoveLayer />
          </div>
          <div className="flex-1 border-y border-r border-[#b0b0b0] font-['Noto_Sans',sans-serif] font-bold">
            {layers.map((l) => (
              <div key={l.name} className="flex h-[23px] items-center">
                <div className="ml-[23px] flex size-[17px] shrink-0 items-center justify-center border border-[#b4b4b4] bg-white">
                  {l.on && <svg width="13" height="13" viewBox="0 0 13 13" fill="none"><path d="M2 6.500l3 4.500L11 1.500" stroke="#000" strokeWidth="2.200" /></svg>}
                </div>
                <div className="ml-[6px] flex w-[19px] shrink-0 justify-center">
                  <div className={l.dot ? `size-[11px] rounded-full border ${l.swatch}` : `size-[19px] border ${l.swatch}`} />
                </div>
                <div className="ml-[7px] mt-[2px] flex-1"><span className={`inline-block whitespace-nowrap ${l.cls}`}>{l.name}</span></div>
                {l.chip && <div className="mr-[7px]"><Chip /></div>}
              </div>
            ))}
          </div>
        </div>
        <div className="flex w-[7px] shrink-0 items-start justify-center pt-[392px]"><div className="flex flex-col gap-[2px]">{[0, 1, 2, 3, 4, 5].map((i) => <div key={i} className="size-px bg-[#a0a0a0]" />)}</div></div>
        <div className="flex-1 overflow-hidden border-b border-l border-t border-[#b0b0b0]"><MapCanvas /></div>
      </div>

      <div className="absolute right-0 top-0 h-full w-px bg-[#a8a8a8]" />
      <svg className="absolute left-[47px] top-[626px]" width="14" height="20" viewBox="0 0 14 20"><path d="M1 1v15l3.500-3L7 18.500l2.500-1L7.200 12H12z" fill="#fff" stroke="#000" /></svg>
    </div>
  );
}
